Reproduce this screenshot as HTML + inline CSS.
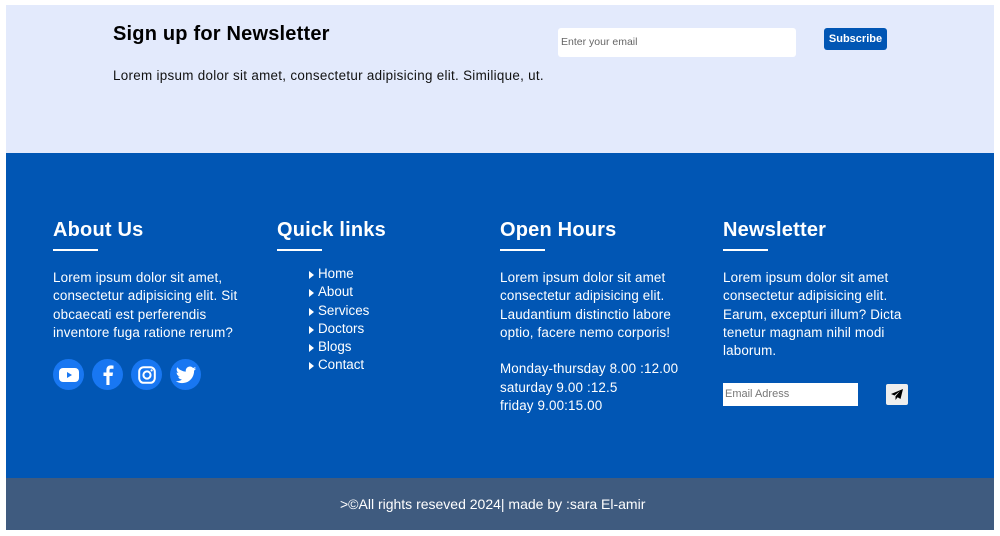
<!DOCTYPE html>
<html><head><meta charset="utf-8"><style>
*{margin:0;padding:0;box-sizing:border-box}
body{width:1000px;height:536px;background:#fff;font-family:"Liberation Sans",sans-serif;position:relative;overflow:hidden}
.a{position:absolute}
.top{left:6px;top:5px;width:988px;height:148px;background:#e3eafc}
.blue{left:6px;top:153px;width:988px;height:325px;background:#0156b4}
.bot{left:6px;top:478px;width:988px;height:52px;background:#3f5b7f}
h2{position:absolute;font-size:20px;font-weight:bold;color:#fff;letter-spacing:.2px}
.ul{position:absolute;height:2px;width:45px;background:#fff}
.p{position:absolute;color:#fff;font-size:13.4px;line-height:18.3px;letter-spacing:.15px}
.ic{position:absolute;top:359px;width:31px;height:31px;border-radius:50%;background:#1877f2}
.ic svg{position:absolute;left:50%;top:50%;transform:translate(-50%,-50%)}
.ql{position:absolute;left:309px;top:265px;color:#fff;font-size:13.4px;line-height:18.3px}
.ql div:before{content:"";display:inline-block;border-left:5px solid #fff;border-top:4.5px solid transparent;border-bottom:4.5px solid transparent;margin-right:4px;vertical-align:-1px}
</style></head><body>
<div class="a top"></div>
<div class="a" style="left:113px;top:23px;font-size:20px;font-weight:900;color:#000;letter-spacing:.2px">Sign up for Newsletter</div>
<div class="a" style="left:113px;top:68px;font-size:13.4px;color:#111;letter-spacing:.3px">Lorem ipsum dolor sit amet, consectetur adipisicing elit. Similique, ut.</div>
<div class="a" style="left:558px;top:28px;width:238px;height:29px;background:#fff;border-radius:3px;font-size:10.5px;color:#666;line-height:29px;padding-left:3px">Enter your email</div>
<div class="a" style="left:824px;top:28px;width:63px;height:22px;background:#0156b4;border-radius:3px;color:#fff;font-size:11px;font-weight:bold;text-align:center;line-height:22px">Subscribe</div>

<div class="a blue"></div>
<h2 style="left:53px;top:219px">About Us</h2><div class="ul" style="left:53px;top:249px"></div>
<h2 style="left:277px;top:219px">Quick links</h2><div class="ul" style="left:277px;top:249px"></div>
<h2 style="left:500px;top:219px">Open Hours</h2><div class="ul" style="left:500px;top:249px"></div>
<h2 style="left:723px;top:219px">Newsletter</h2><div class="ul" style="left:723px;top:249px"></div>

<div class="p" style="left:53px;top:269px">Lorem ipsum dolor sit amet,<br>consectetur adipisicing elit. Sit<br>obcaecati est perferendis<br>inventore fuga ratione rerum?</div>

<div class="ic" style="left:53px"><svg width="20" height="14" viewBox="0 0 20 14"><rect width="20" height="14" rx="4" fill="#fff"/><path d="M8 4l5 3-5 3z" fill="#1877f2"/></svg></div>
<div class="ic" style="left:92px"><svg width="11" height="20" viewBox="0 0 11 20"><path d="M7 20V11h3l.5-3.5H7V5.5c0-1 .3-1.7 1.8-1.7H11V.6C10.6.5 9.5.4 8.3.4 5.7.4 3.9 2 3.9 4.9v2.6H1V11h2.9v9z" fill="#fff"/></svg></div>
<div class="ic" style="left:131px"><svg width="18" height="18" viewBox="0 0 18 18"><rect x="1.2" y="1.2" width="15.6" height="15.6" rx="4.5" fill="none" stroke="#fff" stroke-width="2"/><circle cx="9" cy="9" r="3.6" fill="none" stroke="#fff" stroke-width="2"/><circle cx="13.6" cy="4.4" r="1.1" fill="#fff"/></svg></div>
<div class="ic" style="left:170px"><svg width="21" height="17" viewBox="0 0 24 20"><path d="M24 2.4c-.9.4-1.8.7-2.8.8 1-.6 1.8-1.6 2.2-2.7-1 .6-2 1-3.1 1.2C19.3.7 18 0 16.6 0c-2.7 0-4.9 2.200-4.9 4.9 0 .4 0 .8.1 1.1C7.7 5.8 4.1 3.9 1.7.9c-.4.7-.7 1.6-.7 2.5 0 1.7.9 3.2 2.2 4.1-.8 0-1.6-.2-2.2-.6v.1c0 2.4 1.700 4.4 3.9 4.8-.4.1-.8.2-1.3.2-.3 0-.6 0-.9-.1.6 2 2.4 3.4 4.6 3.4-1.7 1.3-3.8 2.1-6.1 2.1-.4 0-.8 0-1.2-.1C2.2 18.7 4.8 19.5 7.5 19.5c9.1 0 14-7.5 14-14v-.6c1-.7 1.8-1.6 2.5-2.5z" fill="#fff"/></svg></div>

<div class="ql"><div>Home</div><div>About</div><div>Services</div><div>Doctors</div><div>Blogs</div><div>Contact</div></div>

<div class="p" style="left:500px;top:269px">Lorem ipsum dolor sit amet<br>consectetur adipisicing elit.<br>Laudantium distinctio labore<br>optio, facere nemo corporis!<br><br>Monday-thursday 8.00 :12.00<br>saturday 9.00 :12.5<br>friday 9.00:15.00</div>

<div class="p" style="left:723px;top:269px">Lorem ipsum dolor sit amet<br>consectetur adipisicing elit.<br>Earum, excepturi illum? Dicta<br>tenetur magnam nihil modi<br>laborum.</div>

<div class="a" style="left:723px;top:383px;width:135px;height:23px;background:#fff;font-size:11px;color:#777;line-height:23px;padding-left:2px">Email Adress</div>
<div class="a" style="left:886px;top:384px;width:22px;height:21px;background:#eee;border-radius:2px"><svg style="position:absolute;left:5px;top:5px" width="12" height="11" viewBox="0 0 12 11"><path d="M12 0L0 5l3.5 1.5L9 2 4.5 7.2 4.5 11 6.6 8.3 9.5 10z" fill="#000"/></svg></div>

<div class="a bot"></div>
<div class="a" style="left:340px;top:496px;color:#fff;font-size:14px">&gt;©All rights reseved 2024| made by :sara El-amir</div>
</body></html>
